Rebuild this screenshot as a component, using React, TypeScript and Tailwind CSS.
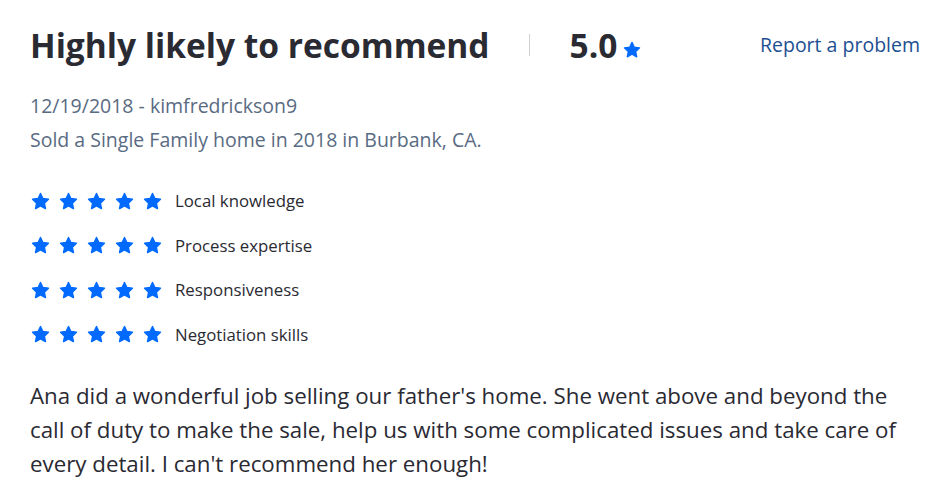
import { Fragment } from "react";

const categories = [
  "Local knowledge",
  "Process expertise",
  "Responsiveness",
  "Negotiation skills",
];

function StarIcon({ className }: { className?: string }) {
  return (
    <svg viewBox="0 0 24 24" className={className} aria-hidden="true">
      <path
        d="M12 2.8l2.75 5.85 6.35.8-4.65 4.4 1.2 6.3L12 17.05 6.35 20.15l1.2-6.3L2.9 9.45l6.35-.8z"
        fill="currentColor"
        stroke="currentColor"
        strokeWidth="1.6"
        strokeLinejoin="round"
      />
    </svg>
  );
}

export default function App() {
  return (
    <div
      className="w-[936px] h-[496px] bg-white text-[#2a2a33] pl-[30px] pr-[16px] pt-[23px] overflow-hidden"
      style={{ fontFamily: '"Open Sans", "Liberation Sans", sans-serif' }}
    >
      {/* Header */}
      <div className="flex items-center h-[44px]">
        <h1 className="text-[33.5px] font-bold leading-[44px]">Highly likely to recommend</h1>
        <div className="w-px h-[22px] bg-[#d1d1d5] ml-[39px] mr-[40px]" />
        <span className="text-[33.5px] font-bold leading-[44px]">5.0</span>
        <StarIcon className="w-[20px] h-[20px] text-[#006aff] ml-[5px] mt-[10px]" />
        <div className="flex-1" />
        <a className="text-[19.5px] text-[#1d4f91] leading-[24px]">Report a problem</a>
      </div>

      {/* Meta */}
      <div className="mt-[22px] text-[19.5px] text-[#596b82] leading-[34px]">
        <p>12/19/2018 - kimfredrickson9</p>
        <p>Sold a Single Family home in 2018 in Burbank, CA.</p>
      </div>

      {/* Category ratings */}
      <div className="mt-[32px] flex flex-col gap-[20.5px]">
        {categories.map((c) => (
          <div key={c} className="flex items-center h-[24px]">
            <div className="flex gap-[7px]">
              {[0, 1, 2, 3, 4].map((i) => (
                <Fragment key={i}>
                  <StarIcon className="w-[21px] h-[21px] text-[#006aff]" />
                </Fragment>
              ))}
            </div>
            <span className="ml-[12px] text-[16.8px] leading-[24px]">{c}</span>
          </div>
        ))}
      </div>

      {/* Review body */}
      <p className="mt-[32px] text-[22.3px] leading-[34px]">
        Ana did a wonderful job selling our father's home. She went above and beyond the call of duty to make the sale, help us with some complicated issues and take care of every detail. I can't recommend her enough!
      </p>
    </div>
  );
}
